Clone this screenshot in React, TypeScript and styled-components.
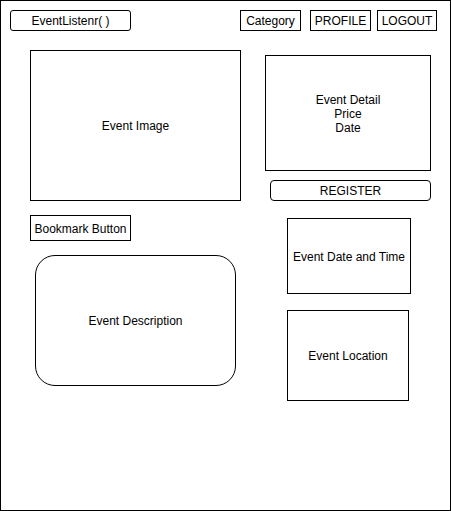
import React from 'react'
import styled, { createGlobalStyle } from 'styled-components'

const GlobalStyle = createGlobalStyle`
  html, body {
    margin: 0;
    padding: 0;
    background: #fff;
  }
  * {
    box-sizing: border-box;
  }
`

const Frame = styled.div`
  width: 451px;
  height: 511px;
  border: 1px solid #000;
  background: #fff;
  font-family: 'Liberation Sans', Arial, Helvetica, sans-serif;
  font-size: 12px;
  color: #000;
`

const Header = styled.header`
  display: flex;
  align-items: flex-start;
  justify-content: space-between;
  padding: 9px 13px 0 9px;
`

const Logo = styled.div`
  width: 121px;
  height: 21px;
  border: 1px solid #000;
  border-radius: 3px;
  display: flex;
  align-items: center;
  justify-content: center;
  padding-top: 1px;
`

const Nav = styled.nav`
  display: flex;
`

const NavButton = styled.div<{ $w: number; $gap?: number }>`
  width: ${({ $w }) => $w}px;
  height: 21px;
  margin-left: ${({ $gap }) => $gap ?? 0}px;
  border: 1px solid #000;
  display: flex;
  align-items: center;
  justify-content: center;
  padding-top: 1px;
`

const Main = styled.main`
  display: flex;
  align-items: flex-start;
  padding: 19px 0 0 29px;
  gap: 24px;
`

const Column = styled.div`
  display: flex;
  flex-direction: column;
  align-items: flex-start;
`

const Box = styled.div<{ $w: number; $h: number; $top?: number; $left?: number; $round?: number }>`
  width: ${({ $w }) => $w}px;
  height: ${({ $h }) => $h}px;
  margin-top: ${({ $top }) => $top ?? 0}px;
  margin-left: ${({ $left }) => $left ?? 0}px;
  border: 1px solid #000;
  border-radius: ${({ $round }) => $round ?? 0}px;
  display: flex;
  align-items: center;
  justify-content: center;
  text-align: center;
  line-height: 14px;
  padding-top: 1px;
`

export default function App() {
  return (
    <>
      <GlobalStyle />
      <Frame>
        <Header>
          <Logo>EventListenr( )</Logo>
          <Nav>
            <NavButton $w={61}>Category</NavButton>
            <NavButton $w={61} $gap={9}>PROFILE</NavButton>
            <NavButton $w={60} $gap={6}>LOGOUT</NavButton>
          </Nav>
        </Header>
        <Main>
          <Column>
            <Box $w={211} $h={151}>Event Image</Box>
            <Box $w={101} $h={26} $top={14}>Bookmark Button</Box>
            <Box $w={201} $h={131} $top={14} $left={5} $round={20}>
              Event Description
            </Box>
          </Column>
          <Column>
            <Box $w={166} $h={116} $top={5}>
              Event Detail
              <br />
              Price
              <br />
              Date
            </Box>
            <Box $w={161} $h={21} $top={9} $left={5} $round={4}>
              REGISTER
            </Box>
            <Box $w={124} $h={76} $top={17} $left={22}>
              Event Date and Time
            </Box>
            <Box $w={122} $h={91} $top={16} $left={22}>
              Event Location
            </Box>
          </Column>
        </Main>
      </Frame>
    </>
  )
}
